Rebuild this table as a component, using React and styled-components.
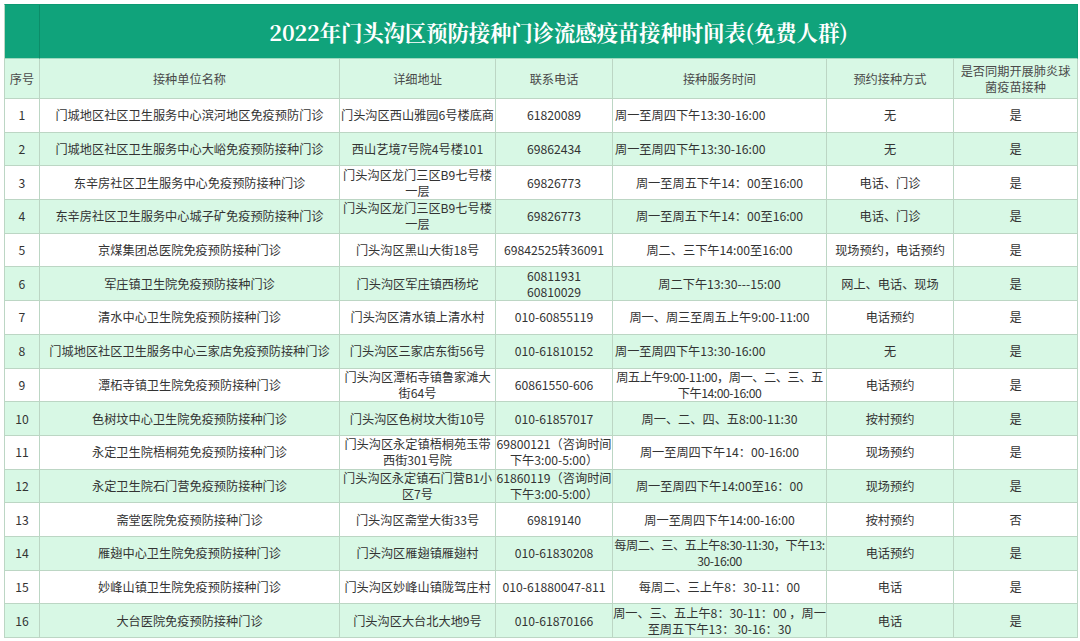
import React from "react";
import styled, { createGlobalStyle } from "styled-components";

const GlobalStyle = createGlobalStyle`
  html, body {
    margin: 0;
    padding: 0;
    background: #fff;
  }
  * {
    box-sizing: border-box;
  }
`;

const Page = styled.div`
  width: 1080px;
  height: 641px;
  padding: 4px 0 0 4px;
  background: #fff;
  font-family: "Noto Sans CJK SC", "Noto Sans", sans-serif;
`;

const Table = styled.div`
  display: grid;
  width: 1074px;
  grid-template-columns: 35px 300px 156px 117px 214px 127px 124px;
  grid-template-rows: 54px 40px repeat(16, 33.69px);
  border-left: 1px solid #bcd6c4;
  border-top: 1px solid #0d9a72;
`;

const TitleBlank = styled.div`
  background: #10a37b;
  border-right: 1px solid #0c8d69;
  border-bottom: 1px solid #9fd8bf;
`;

const Title = styled.div`
  grid-column: 2 / span 6;
  background: #10a37b;
  border-right: 1px solid #0d9a72;
  border-bottom: 1px solid #9fd8bf;
  display: flex;
  align-items: center;
  justify-content: center;
  color: #fff;
  font-family: "Noto Serif CJK SC", "Liberation Serif", "Noto Sans CJK SC", serif;
  font-weight: 700;
  font-size: 21.5px;
  letter-spacing: -0.2px;
`;

const Cell = styled.div`
  background: ${(p) => (p.$shade ? "#d8f8e5" : "#ffffff")};
  border-right: 1px solid #bcd6c4;
  border-bottom: 1px solid #bcd6c4;
  display: flex;
  align-items: center;
  justify-content: ${(p) => (p.$align === "left" ? "flex-start" : "center")};
  text-align: ${(p) => (p.$align === "left" ? "left" : "center")};
  padding: 0 ${(p) => (p.$tight ? "0" : "2px")};
  overflow: hidden;
  white-space: nowrap;
  color: ${(p) => (p.$head ? "#4a4a4a" : "#333")};
  font-size: 12.2px;
  line-height: 16px;
  letter-spacing: ${(p) => (p.$tight ? "-0.45px" : "0")};
`;

const Lines = ({ value }) => {
  const list = Array.isArray(value) ? value : [value];
  return (
    <span>
      {list.map((line, i) => (
        <React.Fragment key={i}>
          {i > 0 && <br />}
          {line}
        </React.Fragment>
      ))}
    </span>
  );
};

const headers = [
  "序号",
  "接种单位名称",
  "详细地址",
  "联系电话",
  "接种服务时间",
  "预约接种方式",
  ["是否同期开展肺炎球", "菌疫苗接种"],
];

const rows = [
  {
    name: "门城地区社区卫生服务中心滨河地区免疫预防门诊",
    addr: "门头沟区西山雅园6号楼底商",
    phone: "61820089",
    time: "周一至周四下午13:30-16:00",
    left: true,
    way: "无",
    yes: "是",
  },
  {
    name: "门城地区社区卫生服务中心大峪免疫预防接种门诊",
    addr: "西山艺境7号院4号楼101",
    phone: "69862434",
    time: "周一至周四下午13:30-16:00",
    left: true,
    way: "无",
    yes: "是",
  },
  {
    name: "东辛房社区卫生服务中心免疫预防接种门诊",
    addr: ["门头沟区龙门三区B9七号楼", "一层"],
    phone: "69826773",
    time: "周一至周五下午14：00至16:00",
    way: "电话、门诊",
    yes: "是",
  },
  {
    name: "东辛房社区卫生服务中心城子矿免疫预防接种门诊",
    addr: ["门头沟区龙门三区B9七号楼", "一层"],
    phone: "69826773",
    time: "周一至周五下午14：00至16:00",
    way: "电话、门诊",
    yes: "是",
  },
  {
    name: "京煤集团总医院免疫预防接种门诊",
    addr: "门头沟区黑山大街18号",
    phone: "69842525转36091",
    time: "周二、三下午14:00至16:00",
    way: "现场预约，电话预约",
    yes: "是",
  },
  {
    name: "军庄镇卫生院免疫预防接种门诊",
    addr: "门头沟区军庄镇西杨坨",
    phone: ["60811931", "60810029"],
    time: "周二下午13:30---15:00",
    way: "网上、电话、现场",
    yes: "是",
  },
  {
    name: "清水中心卫生院免疫预防接种门诊",
    addr: "门头沟区清水镇上清水村",
    phone: "010-60855119",
    time: "周一、周三至周五上午9:00-11:00",
    way: "电话预约",
    yes: "是",
  },
  {
    name: "门城地区社区卫生服务中心三家店免疫预防接种门诊",
    addr: "门头沟区三家店东街56号",
    phone: "010-61810152",
    time: "周一至周四下午13:30-16:00",
    left: true,
    way: "无",
    yes: "是",
  },
  {
    name: "潭柘寺镇卫生院免疫预防接种门诊",
    addr: ["门头沟区潭柘寺镇鲁家滩大", "街64号"],
    phone: "60861550-606",
    time: ["周五上午9:00-11:00，周一、二、三、五", "下午14:00-16:00"],
    tight: true,
    way: "电话预约",
    yes: "是",
  },
  {
    name: "色树坟中心卫生院免疫预防接种门诊",
    addr: "门头沟区色树坟大街10号",
    phone: "010-61857017",
    time: "周一、二、四、五8:00-11:30",
    way: "按村预约",
    yes: "是",
  },
  {
    name: "永定卫生院梧桐苑免疫预防接种门诊",
    addr: ["门头沟区永定镇梧桐苑玉带", "西街301号院"],
    phone: ["69800121（咨询时间", "下午3:00-5:00）"],
    time: "周一至周四下午14：00-16:00",
    way: "现场预约",
    yes: "是",
  },
  {
    name: "永定卫生院石门营免疫预防接种门诊",
    addr: ["门头沟区永定镇石门营B1小", "区7号"],
    phone: ["61860119（咨询时间", "下午3:00-5:00）"],
    time: "周一至周四下午14:00至16：00",
    way: "现场预约",
    yes: "是",
  },
  {
    name: "斋堂医院免疫预防接种门诊",
    addr: "门头沟区斋堂大街33号",
    phone: "69819140",
    time: "周一至周四下午14:00-16:00",
    way: "按村预约",
    yes: "否",
  },
  {
    name: "雁翅中心卫生院免疫预防接种门诊",
    addr: "门头沟区雁翅镇雁翅村",
    phone: "010-61830208",
    time: ["每周二、三、五上午8:30-11:30，下午13:", "30-16:00"],
    tight: true,
    way: "电话预约",
    yes: "是",
  },
  {
    name: "妙峰山镇卫生院免疫预防接种门诊",
    addr: "门头沟区妙峰山镇陇驾庄村",
    phone: "010-61880047-811",
    time: "每周二、三上午8：30-11：00",
    way: "电话",
    yes: "是",
  },
  {
    name: "大台医院免疫预防接种门诊",
    addr: "门头沟区大台北大地9号",
    phone: "010-61870166",
    time: ["周一、三、五上午8：30-11：00 ，周一", "至周五下午13：30-16：30"],
    way: "电话",
    yes: "是",
  },
];

export default function App() {
  return (
    <>
      <GlobalStyle />
      <Page>
        <Table>
          <TitleBlank />
          <Title>2022年门头沟区预防接种门诊流感疫苗接种时间表(免费人群)</Title>
          {headers.map((h, i) => (
            <Cell key={"h" + i} $shade $head>
              <Lines value={h} />
            </Cell>
          ))}
          {rows.map((r, i) => {
            const shade = i % 2 === 1;
            return (
              <React.Fragment key={i}>
                <Cell $shade={shade}>{i + 1}</Cell>
                <Cell $shade={shade}>
                  <Lines value={r.name} />
                </Cell>
                <Cell $shade={shade}>
                  <Lines value={r.addr} />
                </Cell>
                <Cell $shade={shade}>
                  <Lines value={r.phone} />
                </Cell>
                <Cell
                  $shade={shade}
                  $tight={r.tight}
                  $align={r.left ? "left" : "center"}
                >
                  <Lines value={r.time} />
                </Cell>
                <Cell $shade={shade}>
                  <Lines value={r.way} />
                </Cell>
                <Cell $shade={shade}>{r.yes}</Cell>
              </React.Fragment>
            );
          })}
        </Table>
      </Page>
    </>
  );
}
